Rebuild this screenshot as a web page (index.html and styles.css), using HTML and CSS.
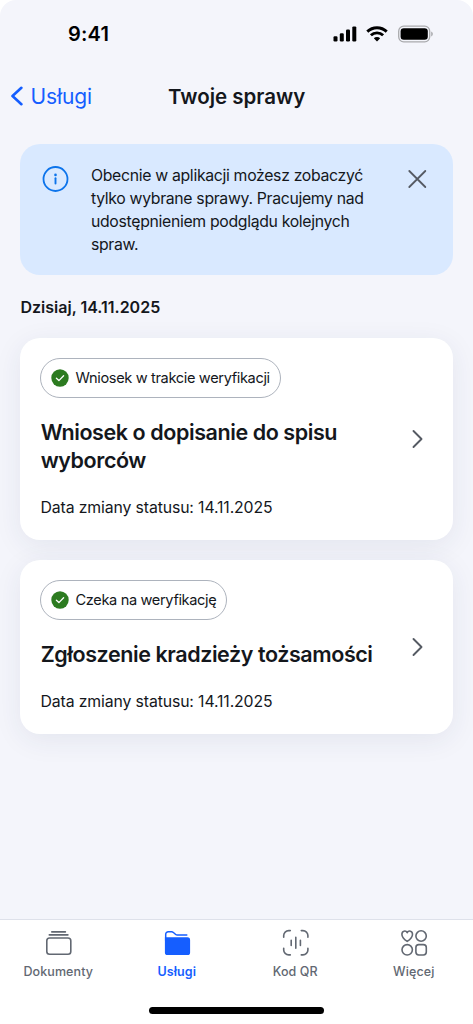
FILE: index.html
```html
<!DOCTYPE html>
<html lang="pl">
<head>
<meta charset="utf-8">
<title>Twoje sprawy</title>
<link rel="stylesheet" href="styles.css">
</head>
<body>
<div class="screen">
  <div class="status-bar">
    <span class="time">9:41</span>
    <div class="status-icons">
      <svg width="24" height="16" viewBox="0 0 24 16"><rect x="0.5" y="10.3" width="4" height="5.2" rx="1.2"/><rect x="6.8" y="7.3" width="4" height="8.2" rx="1.2"/><rect x="13" y="3.5" width="4" height="12" rx="1.2"/><rect x="19.3" y="0.4" width="4" height="15.1" rx="1.2"/></svg>
      <svg class="wifi" width="22" height="16" viewBox="0 0 22 16"><g fill="none" stroke="#000" stroke-width="2.9"><path d="M1.3 5.6a14 14 0 0 1 19.4 0"/><path d="M4.9 9.3a8.8 8.8 0 0 1 12.2 0"/></g><path d="M11 15.5l-3.2-3.2a4.6 4.6 0 0 1 6.4 0z"/></svg>
      <svg class="battery" width="36" height="18" viewBox="0 0 36 18"><rect x="0.7" y="1.2" width="31" height="15.6" rx="5" fill="none" stroke="#a9aaad" stroke-width="1.3"/><rect x="2.6" y="3.2" width="27.2" height="11.6" rx="3.2"/><path d="M33.2 6.6v4.8c1-.4 1.6-1.3 1.6-2.4s-.6-2-1.6-2.4z" fill="#a9aaad"/></svg>
    </div>
  </div>

  <header class="nav">
    <a class="back">
      <svg width="14" height="20" viewBox="0 0 14 20"><path d="M11.4 1.8L2.5 10l8.900 8.200" fill="none" stroke="#155eff" stroke-width="2.6" stroke-linecap="round" stroke-linejoin="round"/></svg>
      <span>Usługi</span>
    </a>
    <h1 class="nav-title">Twoje sprawy</h1>
  </header>

  <main class="content">
    <section class="banner">
      <svg class="info" width="27" height="27" viewBox="0 0 27 27"><circle cx="13.5" cy="13" r="12" fill="none" stroke="#0d74eb" stroke-width="1.8"/><circle cx="13.5" cy="8.900" r="1.3" fill="#0d74eb"/><path d="M13.5 12.300v5.300" stroke="#0d74eb" stroke-width="1.9" stroke-linecap="round"/></svg>
      <p class="banner-text">Obecnie w aplikacji możesz zobaczyć<br>tylko wybrane sprawy. Pracujemy nad<br>udostępnieniem podglądu kolejnych<br>spraw.</p>
      <svg class="close" width="20" height="20" viewBox="0 0 20 20"><path d="M2.300 2l16 16M18.300 2L2.300 18" fill="none" stroke="#555a63" stroke-width="1.8" stroke-linecap="round"/></svg>
    </section>

    <h2 class="date">Dzisiaj, 14.11.2025</h2>

    <article class="card">
      <div class="card-body">
        <div class="chip">
          <svg width="18" height="18" viewBox="0 0 18 18"><circle cx="9" cy="9" r="8.7" fill="#2c7b20"/><path d="M5.4 9.3l2.500 2.300 4.700-4.900" fill="none" stroke="#fff" stroke-width="1.3" stroke-linecap="round" stroke-linejoin="round"/></svg>
          <span>Wniosek w trakcie weryfikacji</span>
        </div>
        <h3 class="card-title">Wniosek o dopisanie do spisu<br>wyborców</h3>
        <p class="card-date">Data zmiany statusu: 14.11.2025</p>
      </div>
      <svg class="chevron" width="12" height="20" viewBox="0 0 12 20"><path d="M1.500 2l8 8-8 8" fill="none" stroke="#555a63" stroke-width="1.9" stroke-linecap="round" stroke-linejoin="round"/></svg>
    </article>

    <article class="card">
      <div class="card-body">
        <div class="chip">
          <svg width="18" height="18" viewBox="0 0 18 18"><circle cx="9" cy="9" r="8.7" fill="#2c7b20"/><path d="M5.4 9.3l2.500 2.300 4.700-4.900" fill="none" stroke="#fff" stroke-width="1.3" stroke-linecap="round" stroke-linejoin="round"/></svg>
          <span>Czeka na weryfikację</span>
        </div>
        <h3 class="card-title">Zgłoszenie kradzieży tożsamości</h3>
        <p class="card-date">Data zmiany statusu: 14.11.2025</p>
      </div>
      <svg class="chevron" width="12" height="20" viewBox="0 0 12 20"><path d="M1.500 2l8 8-8 8" fill="none" stroke="#555a63" stroke-width="1.9" stroke-linecap="round" stroke-linejoin="round"/></svg>
    </article>
  </main>

  <footer class="tab-bar">
    <nav class="tabs">
      <a class="tab">
        <svg width="28" height="28" viewBox="0 0 28 28" fill="none" stroke="currentColor" stroke-width="1.6" stroke-linecap="round"><path d="M7.800 2.900h13.600M5.300 5.900h18.600"/><rect x="2.8" y="9" width="24" height="16.3" rx="2.8"/></svg>
        <span>Dokumenty</span>
      </a>
      <a class="tab active">
        <svg width="28" height="28" viewBox="0 0 28 28"><path d="M2.700 12V5.400a2.600 2.600 0 0 1 2.600-2.600h3.300c.7 0 1.300.3 1.800.7l2.300 2c.4.400 1 .6 1.600.6h9.500" fill="none" stroke="currentColor" stroke-width="1.5" stroke-linecap="round"/><path d="M1.900 8.300h22.600a2.600 2.600 0 0 1 2.600 2.600v12.600a2.600 2.600 0 0 1-2.600 2.600h-20a2.600 2.600 0 0 1-2.600-2.600z" fill="currentColor"/></svg>
        <span>Usługi</span>
      </a>
      <a class="tab">
        <svg width="28" height="28" viewBox="0 0 28 28" fill="none" stroke="currentColor" stroke-width="1.6" stroke-linecap="round"><path transform="translate(0.5 0)" d="M2.200 8.200V6.600a5 5 0 0 1 5-5h1.600M19.800 1.600h1.600a5 5 0 0 1 5 5v1.600M26.400 19.300v1.600a5 5 0 0 1-5 5h-1.600M8.800 25.900H7.200a5 5 0 0 1-5-5v-1.600M14.300 8.300v11M9.700 11.200v5.200M18.900 11.200v5.200"/></svg>
        <span>Kod QR</span>
      </a>
      <a class="tab">
        <svg width="28" height="28" viewBox="0 0 28 28" fill="none" stroke="currentColor" stroke-width="1.6" stroke-linejoin="round"><path d="M7.200 12.400C4.300 10.500 1.900 8 1.900 5.200c0-3.400 3.900-4.200 5.300-1.500 1.400-2.700 5.300-1.900 5.300 1.500 0 2.800-2.400 5.300-5.300 7.200z"/><circle cx="21.1" cy="7" r="5.2"/><circle cx="7.2" cy="20.8" r="5.2"/><rect x="15.9" y="15.6" width="10.4" height="10.4" rx="2.9"/></svg>
        <span>Więcej</span>
      </a>
    </nav>
    <div class="home-indicator"></div>
  </footer>
</div>
</body>
</html>
```
FILE: styles.css
```css
* { box-sizing: border-box; }
body { margin: 0; background: #fff; font-family: Inter, "Liberation Sans", sans-serif; color: #14171c; }
h1, h2, h3, p { margin: 0; }
svg { display: block; flex: none; }
span, p, h1, h2, h3 { white-space: nowrap; }

.screen {
  width: 473px;
  height: 1024px;
  display: flex;
  flex-direction: column;
  background: #f4f5fb;
  border-radius: 16px 16px 0 0;
  overflow: hidden;
}

.status-bar { height: 67px; padding: 0 39px 0 68px; display: flex; align-items: center; justify-content: space-between; }
.time { font-size: 20px; font-weight: 600; color: #000; letter-spacing: 0.2px; }
.status-icons { display: flex; align-items: center; }
.wifi { margin-left: 9px; }
.battery { margin-left: 10px; }

.nav { height: 58px; padding-left: 10px; display: grid; grid-template-columns: 158px auto 1fr; align-items: center; }
.back { display: flex; align-items: center; gap: 6.5px; font-size: 21px; letter-spacing: -0.1px; color: #155eff; }
.nav-title { font-size: 20.5px; font-weight: 600; }

.content { flex: 1; padding: 18.5px 20px 0; }
.banner { display: flex; align-items: flex-start; height: 131px; padding: 21px 26px 0 22px; border-radius: 20px; background: #d9e9ff; }
.info { margin-top: 1px; }
.banner-text { flex: 1; margin-top: 0.8px; margin-left: 22px; font-size: 15.8px; line-height: 22.8px; letter-spacing: -0.32px; }
.close { margin-top: 4px; }

.date { height: 63.5px; padding-left: 0.5px; line-height: 65px; font-size: 16px; font-weight: 600; }

.card {
  display: flex;
  align-items: center;
  padding: 20px 29px 19.7px 20px;
  border-radius: 20px;
  background: #fff;
  box-shadow: 0 6px 28px rgba(40, 50, 90, 0.08);
}
.card + .card { margin-top: 20px; }
.card-body { flex: 1; }
.chip { display: inline-flex; align-items: center; gap: 6.5px; height: 40.4px; padding: 0 10px; border: 1.3px solid #adb3bd; border-radius: 21px; font-size: 14.6px; letter-spacing: -0.36px; vertical-align: top; }
.card-title { margin-top: 19.9px; padding-left: 0.7px; font-size: 21.5px; line-height: 28px; font-weight: 600; letter-spacing: -0.42px; }
.card-date { margin-top: 21px; padding-left: 0.5px; font-size: 15.8px; line-height: 25px; letter-spacing: -0.12px; }

.tab-bar { height: 105px; background: #fff; border-top: 1px solid #dee1ea; }
.tabs { display: grid; grid-template-columns: repeat(4, 1fr); padding-top: 9px; margin-left: -1px; }
.tab { display: flex; flex-direction: column; align-items: center; gap: 6px; font-size: 12.5px; line-height: 18px; font-weight: 500; letter-spacing: 0.1px; color: #626872; }
.tab.active { color: #155eff; font-weight: 600; }
.home-indicator { width: 175px; height: 7px; margin: 26px auto 0; border-radius: 4px; background: #000; }
```
